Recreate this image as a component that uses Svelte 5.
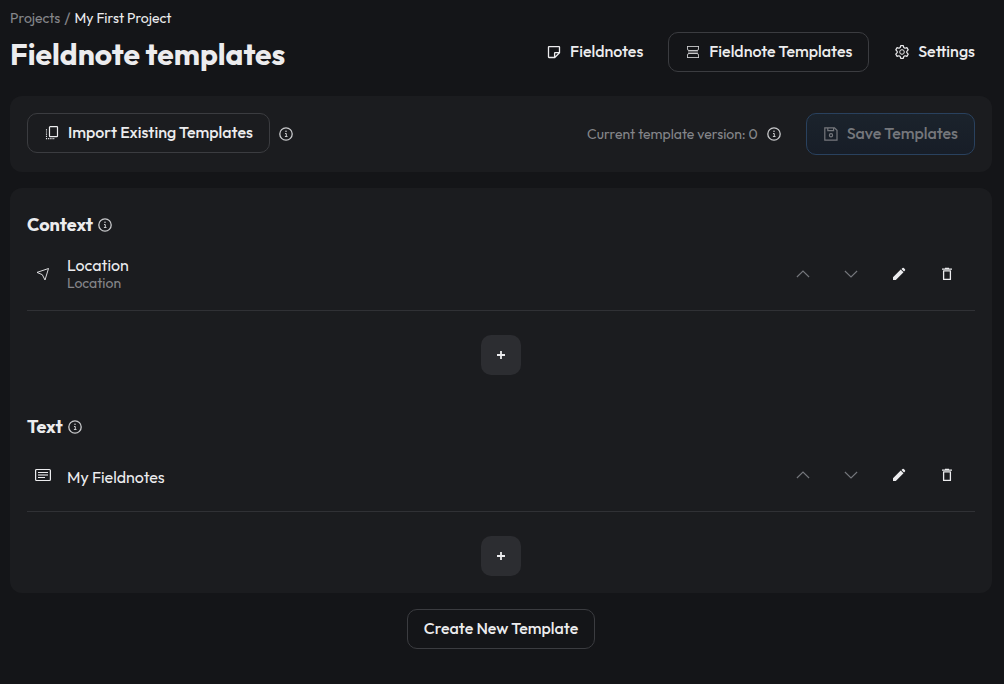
<script>
  const sections = [
    {
      title: 'Context',
      items: [{ name: 'Location', kind: 'Location', icon: 'location' }]
    },
    {
      title: 'Text',
      items: [{ name: 'My Fieldnotes', kind: '', icon: 'text' }]
    }
  ];
</script>

{#snippet info()}
  <button class="info" type="button" aria-label="More information">
    <svg width="16" height="16" viewBox="0 0 16 16" aria-hidden="true">
      <circle cx="8" cy="8" r="6.2" fill="none" stroke="currentColor" stroke-width="1.3" />
      <path d="M7 7.500h1.300v3M6.900 10.500h2.600" fill="none" stroke="currentColor" />
      <circle cx="8" cy="5.300" r=".8" fill="currentColor" />
    </svg>
  </button>
{/snippet}

<div class="page">
  <header>
    <div class="heading">
      <nav class="crumbs" aria-label="Breadcrumb">
        <a href="#projects">Projects</a><span class="slash">/</span><a class="current" href="#project">My First Project</a>
      </nav>
      <h1>Fieldnote templates</h1>
    </div>
    <nav class="tabs" aria-label="Project">
      <a class="btn" href="#fieldnotes">
        <svg width="16" height="16" viewBox="0 0 16 16" aria-hidden="true">
          <path d="M3 2.6h10q.5 0 .5.5v5.700l-4.700 4.700H3q-.5 0-.5-.5V3.100q0-.5.5-.5zM13.400 8.600H9.100q-.5 0-.5.5v4.300" fill="none" stroke="currentColor" stroke-width="1.300" stroke-linejoin="round" />
        </svg>
        <span>Fieldnotes</span>
      </a>
      <a class="btn outlined" href="#templates" aria-current="page">
        <svg width="16" height="16" viewBox="0 0 16 16" aria-hidden="true">
          <path d="M2.500 2v3q0 1.500 1.500 1.500h8q1.500 0 1.500-1.500V2M2.500 14v-3q0-1.500 1.500-1.500h8q1.500 0 1.500 1.500v3M2.500 2.500h11M2.500 13.500h11" fill="none" stroke="currentColor" opacity=".75" />
          <path d="M3 6h10v4H3z" fill="currentColor" opacity=".35" />
        </svg>
        <span>Fieldnote Templates</span>
      </a>
      <a class="btn" href="#settings">
        <svg width="16" height="16" viewBox="0 0 16 16" fill="none" stroke="currentColor" stroke-linejoin="round" aria-hidden="true">
          <path d="M6.700 1.600h2.600l.5 1.900 1.200.7 1.900-.6 1.300 2.300L12.800 7.300v1.400l1.400 1.400-1.300 2.300-1.900-.6-1.200.7-.5 1.900H6.700l-.5-1.900-1.200-.7-1.900.6-1.300-2.300 1.400-1.400V7.300L1.800 5.900l1.300-2.300 1.900.6 1.200-.7z" stroke-width="1.200" />
          <circle cx="8" cy="8" r="2.300" />
        </svg>
        <span>Settings</span>
      </a>
    </nav>
  </header>

  <section class="panel toolbar">
    <div class="group">
      <button class="btn outlined import" type="button">
        <svg width="16" height="16" viewBox="0 0 16 16" fill="none" stroke="currentColor" aria-hidden="true">
          <rect x="5.500" y="1.600" width="8" height="10" rx=".7" stroke-width="1.200" />
          <path d="M2.500 4.200v9.400h8.500" stroke-dasharray="1.200 1" stroke-width="1.100" />
        </svg>
        <span>Import Existing Templates</span>
      </button>
      {@render info()}
    </div>
    <div class="group">
      <span class="version">Current template version: 0</span>
      {@render info()}
      <button class="btn save" type="button" disabled>
        <svg width="16" height="16" viewBox="0 0 16 16" fill="none" stroke="currentColor" stroke-width="1.200" aria-hidden="true">
          <path d="M1.800 1.800h9.700l2.500 2.500v9.900H1.800zM4.800 1.800v2.900h5.800V1.800" />
          <circle cx="8" cy="9.300" r="1.600" />
        </svg>
        <span>Save Templates</span>
      </button>
    </div>
  </section>

  <main class="panel">
    {#each sections as section}
      <section class="block">
        <div class="title">
          <h2>{section.title}</h2>
          {@render info()}
        </div>
        {#each section.items as item}
          <div class="row">
            <span class="kind">
              {#if item.icon === 'location'}
                <svg width="16" height="16" viewBox="0 0 16 16" aria-hidden="true">
                  <path d="M13.500 2.500 2 6.400l5.300 2.300 2.700 5.300z" fill="none" stroke="currentColor" stroke-width=".9" stroke-linejoin="round" />
                </svg>
              {:else}
                <svg width="16" height="14" viewBox="0 0 16 14" fill="none" stroke="currentColor" aria-hidden="true">
                  <rect x=".6" y="1.500" width="14.800" height="11" rx="1" stroke-width="1.200" />
                  <path d="M3 4.500h10M3 9.500h7" />
                  <path d="M3 7h10" stroke-width="2" opacity=".55" />
                </svg>
              {/if}
            </span>
            <div class="label">
              <span class="name">{item.name}</span>
              <span class="sub">{item.kind}</span>
            </div>
            <div class="actions">
              <button type="button" aria-label="Move up" disabled>
                <svg width="16" height="16" viewBox="0 0 16 16" aria-hidden="true"><path d="m1.900 11 6.100-6 6.100 6" fill="none" stroke="currentColor" stroke-width="1.100" /></svg>
              </button>
              <button type="button" aria-label="Move down" disabled>
                <svg width="16" height="16" viewBox="0 0 16 16" aria-hidden="true"><path d="m1.900 5 6.100 6 6.100-6" fill="none" stroke="currentColor" stroke-width="1.100" /></svg>
              </button>
              <button type="button" aria-label="Edit">
                <svg width="16" height="16" viewBox="0 0 16 16" fill="currentColor" aria-hidden="true">
                  <path d="M2 11.200 9.700 3.500l2.800 2.800L4.800 14H2zM10.500 2.900l1-1q.6-.5 1.300 0L14 3.200q.5.700 0 1.300l-1 1z" />
                </svg>
              </button>
              <button type="button" aria-label="Delete">
                <svg width="16" height="16" viewBox="0 0 16 16" fill="none" stroke="currentColor" aria-hidden="true">
                  <path d="M3 3.100h10M6 2.300h4" stroke-width="1.300" />
                  <path d="M4.600 4.800h6.800v8.600H4.600z" stroke-width="1.300" stroke-linejoin="round" />
                </svg>
              </button>
            </div>
          </div>
        {/each}
        <button class="add" type="button" aria-label="Add to {section.title}">
          <svg width="8" height="8" viewBox="0 0 8 8" aria-hidden="true"><path d="M4 0v8M0 4h8" fill="none" stroke="currentColor" stroke-width="1.800" /></svg>
        </button>
      </section>
    {/each}
  </main>

  <button class="btn outlined create" type="button"><span>Create New Template</span></button>
</div>

<style>
  :global(body) {
    margin: 0;
    background: #141518;
  }
  .page {
    display: flex;
    flex-direction: column;
    gap: 16px;
    padding: 8px 12px 35px 10px;
    color: #ececee;
    font: 400 16px/20px Outfit, Lato, sans-serif;
  }
  header {
    display: flex;
    justify-content: space-between;
    align-items: center;
    padding-bottom: 8px;
  }
  h1, h2 {
    margin: 0;
    font-weight: 700;
  }
  h1 {
    font-size: 30px;
    line-height: 36px;
    padding-top: 8px;
  }
  h2 {
    font-size: 18px;
    line-height: 40px;
  }
  a {
    color: inherit;
    text-decoration: none;
  }
  .crumbs {
    display: flex;
    gap: 4px;
    font-size: 14px;
    color: #85868a;
  }
  .crumbs .current {
    color: #ececee;
  }
  .slash {
    font-size: 16px;
  }
  .tabs {
    display: flex;
    gap: 8px;
    padding-top: 24px;
  }
  button {
    font: inherit;
    color: inherit;
    background: none;
    border: 0;
    padding: 0;
  }
  svg {
    display: block;
    flex: none;
  }
  .btn {
    box-sizing: border-box;
    display: flex;
    align-items: center;
    gap: 8px;
    height: 40px;
    padding: 0 16px;
    border: 1px solid transparent;
    border-radius: 10px;
    font-weight: 500;
    white-space: nowrap;
  }
  .btn span {
    padding-bottom: 2px;
  }
  .outlined {
    border-color: #3b3c40;
  }
  .panel {
    padding: 17px;
    border-radius: 12px;
    background: #1b1c1f;
  }
  .toolbar,
  .group {
    display: flex;
    align-items: center;
    justify-content: space-between;
    gap: 8px;
  }
  .import {
    margin-bottom: 2px;
  }
  .info {
    color: #c9cacc;
  }
  .version {
    font-size: 14px;
    color: #85868a;
  }
  .save {
    height: 42px;
    margin-left: 16px;
    border-color: #29415e;
    background: linear-gradient(#1b232c, #171d27);
    color: #75777c;
  }
  .block + .block {
    padding-top: 32px;
  }
  .title {
    display: flex;
    align-items: center;
    gap: 4px;
  }
  .row {
    display: flex;
    align-items: center;
    padding: 4px 4px 12px 0;
    border-bottom: 1px solid #303135;
  }
  .block:first-child .row {
    padding-top: 5px;
  }
  .kind {
    display: grid;
    place-items: center;
    width: 32px;
    margin-right: 8px;
  }
  .label {
    display: flex;
    flex: 1;
    flex-direction: column;
    padding-bottom: 2px;
  }
  .sub {
    font-size: 14px;
    line-height: 16px;
    color: #85868a;
  }
  .sub:empty {
    display: none;
  }
  .label:has(.sub:empty) {
    padding: 4px 0 0;
  }
  .actions {
    display: flex;
  }
  .actions button {
    display: grid;
    place-items: center;
    width: 48px;
    height: 48px;
  }
  .actions button:disabled {
    color: #75777c;
  }
  .add {
    display: grid;
    place-items: center;
    width: 40px;
    height: 40px;
    margin: 24px auto 0;
    border-radius: 10px;
    background: #2c2d31;
  }
  .create {
    align-self: center;
  }
</style>
